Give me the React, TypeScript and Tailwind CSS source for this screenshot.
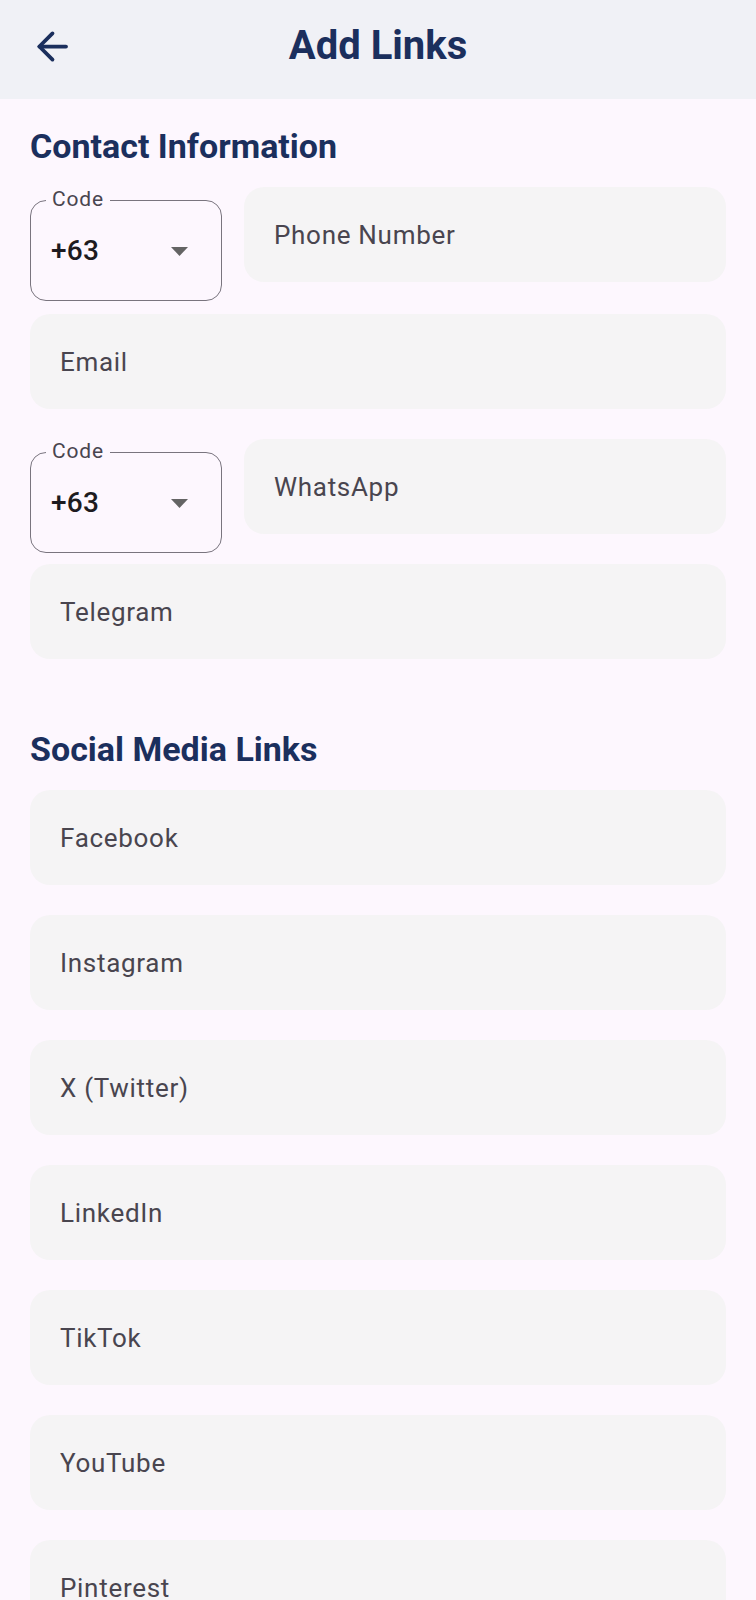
import React from 'react';

const contactFont = "font-['Roboto','Noto_Sans',sans-serif]";

const CodeSelect: React.FC<{ value?: string }> = ({ value = '+63' }) => (
  <div className="relative mt-[13px] h-[101px] w-[192px] shrink-0 rounded-[16px] border-[1.5px] border-[#79747e]">
    <span className="absolute left-[15px] top-[-14px] bg-[#fdf7fe] px-[6px] text-[21px] leading-[24px] tracking-[0.8px] text-[#49454f]">
      Code
    </span>
    <div className="flex h-full items-center justify-between pl-[20px] pr-[33px]">
      <span className="text-[28px] font-medium tracking-[0.3px] text-[#1d1b20]">{value}</span>
      <svg width="17" height="9" viewBox="0 0 17 9" className="mt-[2px]">
        <path d="M0 0h17L8.5 9z" fill="#646464" />
      </svg>
    </div>
  </div>
);

const Field: React.FC<{ placeholder: string; className?: string }> = ({ placeholder, className = '' }) => (
  <div className={`flex h-[95px] items-center rounded-[20px] bg-[#f5f4f5] pl-[30px] ${className}`}>
    <input
      placeholder={placeholder}
      className="h-full w-full bg-transparent text-[26px] tracking-[0.7px] text-[#1d1b20] outline-none placeholder:text-[#49454f]"
    />
  </div>
);

const SectionTitle: React.FC<{ children: React.ReactNode; className?: string }> = ({ children, className = '' }) => (
  <h2 className={`text-[34px] font-bold leading-[40px] text-[#1b2f5d] ${className}`}>{children}</h2>
);

const socialLinks = ['Facebook', 'Instagram', 'X (Twitter)', 'LinkedIn', 'TikTok', 'YouTube', 'Pinterest'];

export default function App() {
  return (
    <div className={`min-h-[1600px] w-full bg-[#fdf7fe] ${contactFont}`}>
      <header className="grid h-[99px] grid-cols-[104px_1fr_104px] items-center bg-[#f0f1f6] pb-[7px]">
        <button className="flex items-center pl-[30px]" aria-label="Back">
          <svg width="45" height="45" viewBox="0 0 24 24" fill="none" stroke="#1b2f5d" strokeWidth="2" strokeLinecap="round" strokeLinejoin="round">
            <path d="M19.2 12H5" />
            <path d="M12 5 5 12 12 19" />
          </svg>
        </button>
        <h1 className="text-center text-[40px] font-bold leading-none text-[#1b2f5d]">Add Links</h1>
        <div />
      </header>

      <main className="px-[30px] pt-[27px]">
        <SectionTitle>Contact Information</SectionTitle>
        <div className="mt-[21px] flex flex-col gap-[30px]">
          <div className="flex h-[97px] items-start gap-[22px]">
            <CodeSelect />
            <Field placeholder="Phone Number" className="flex-1" />
          </div>
          <Field placeholder="Email" />
          <div className="flex h-[95px] items-start gap-[22px]">
            <CodeSelect />
            <Field placeholder="WhatsApp" className="flex-1" />
          </div>
          <Field placeholder="Telegram" />
        </div>

        <SectionTitle className="mt-[70px]">Social Media Links</SectionTitle>
        <div className="mt-[21px] flex flex-col gap-[30px] pb-[40px]">
          {socialLinks.map(name => (
            <Field key={name} placeholder={name} />
          ))}
        </div>
      </main>
    </div>
  );
}
